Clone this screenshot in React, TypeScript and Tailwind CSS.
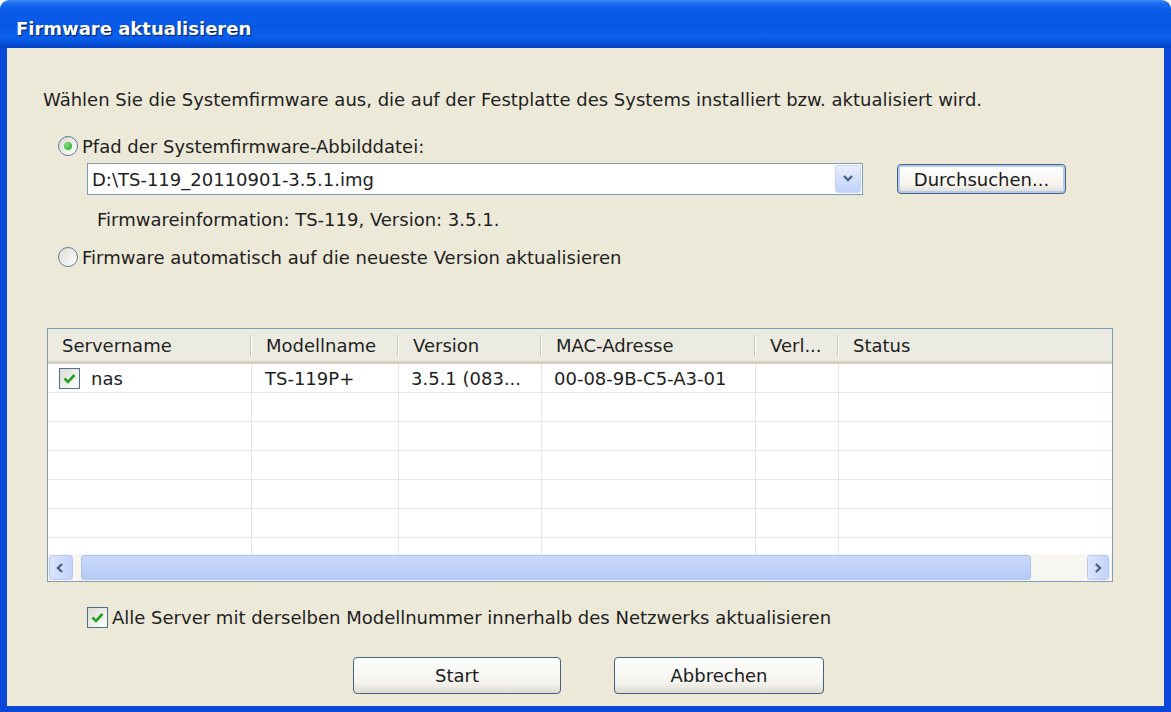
import React from "react";

type Server = {
  name: string;
  model: string;
  version: string;
  mac: string;
  checked: boolean;
};

const servers: Server[] = [
  { name: "nas", model: "TS-119P+", version: "3.5.1 (083...", mac: "00-08-9B-C5-A3-01", checked: true },
];

const columns = [
  { label: "Servername", width: "w-[204px]" },
  { label: "Modellname", width: "w-[147px]" },
  { label: "Version", width: "w-[143px]" },
  { label: "MAC-Adresse", width: "w-[214px]" },
  { label: "Verl...", width: "w-[83px]" },
  { label: "Status", width: "flex-1" },
];

function Radio({ checked }: { checked: boolean }) {
  return (
    <div className="w-[20px] h-[20px] rounded-full border border-[#5d7c9a] bg-[linear-gradient(135deg,#dcdad0,#ffffff)] flex items-center justify-center shrink-0">
      {checked && (
        <div className="w-[8px] h-[8px] rounded-full bg-[radial-gradient(circle_at_35%_35%,#7fe07f,#21a121)]" />
      )}
    </div>
  );
}

function CheckBox({ checked }: { checked: boolean }) {
  return (
    <div className="w-[21px] h-[21px] border border-[#4f6f8f] bg-[linear-gradient(135deg,#dcdcd4,#ffffff)] flex items-center justify-center shrink-0">
      {checked && (
        <svg width="13" height="11" viewBox="0 0 13 11">
          <path d="M1.5 5.5 L5 9 L11.5 2" stroke="#21a121" strokeWidth="2.6" fill="none" />
        </svg>
      )}
    </div>
  );
}

function XpButton({ children, className, focused }: { children: React.ReactNode; className: string; focused?: boolean }) {
  return (
    <button
      className={`${className} rounded-[4px] border border-[#46627e] bg-[linear-gradient(#ffffff,#f4f3ee_70%,#dedbd0)] text-[18px] text-[#1a1a1a] ${
        focused ? "shadow-[inset_0_0_0_2px_#b4ccf2]" : ""
      }`}
    >
      {children}
    </button>
  );
}

function Chevron({ dir }: { dir: "left" | "right" | "down" }) {
  const d =
    dir === "down" ? "M2 3 L6 7 L10 3" : dir === "left" ? "M7 2 L3 6 L7 10" : "M4 2 L8 6 L4 10";
  return (
    <svg width="12" height="12" viewBox="0 0 12 12">
      <path d={d} stroke="#4d6185" strokeWidth="2.4" fill="none" />
    </svg>
  );
}

export default function App() {
  const emptyRows = 6;
  return (
    <div className="w-[1171px] h-[712px] bg-white font-['DejaVu_Sans',sans-serif] text-[#1e1e1e] text-[18px]">
      <div className="w-full h-full flex flex-col rounded-t-[9px] overflow-hidden">
        {/* title bar */}
        <div className="h-[48px] shrink-0 flex items-center pl-[16px] pt-[8px] bg-[linear-gradient(#3d8af7,#1a6cf0_8%,#0a5ce8_20%,#0858e6_55%,#0a60ee_75%,#0552dc_90%,#0340bf)]">
          <span className="text-white font-bold text-[18px] [text-shadow:1px_1px_1px_#0a1f60]">
            Firmware aktualisieren
          </span>
        </div>

        {/* dialog body */}
        <div className="flex-1 border-x-[7px] border-b-[6px] border-[#0b47d9] bg-[#ece9d8] pl-[36px] pt-[40px] flex flex-col">
          <p className="leading-[24px] h-[24px]">
            Wählen Sie die Systemfirmware aus, die auf der Festplatte des Systems installiert bzw. aktualisiert wird.
          </p>

          <div className="mt-[22px] h-[24px] flex items-center gap-[4px] pl-[15px]">
            <Radio checked />
            <span>Pfad der Systemfirmware-Abbilddatei:</span>
          </div>

          <div className="mt-[5px] flex items-center pl-[44px]">
            <div className="w-[776px] h-[32px] border border-[#7f9db9] bg-white flex items-center">
              <span className="flex-1 pl-[4px]">D:\TS-119_20110901-3.5.1.img</span>
              <div className="w-[26px] h-[28px] mr-[1px] rounded-[3px] border border-[#c3d3fd] bg-[linear-gradient(#e6eefc,#c1d3fb)] flex items-center justify-center">
                <Chevron dir="down" />
              </div>
            </div>
            <XpButton className="ml-[34px] w-[169px] h-[30px]" focused>
              Durchsuchen...
            </XpButton>
          </div>

          <p className="mt-[13px] h-[24px] leading-[24px] pl-[54px]">Firmwareinformation: TS-119, Version: 3.5.1.</p>

          <div className="mt-[13px] h-[24px] flex items-center gap-[4px] pl-[15px]">
            <Radio checked={false} />
            <span>Firmware automatisch auf die neueste Version aktualisieren</span>
          </div>

          {/* server list */}
          <div className="mt-[59px] ml-[4px] w-[1066px] h-[254px] border border-[#7f9db9] bg-white flex flex-col overflow-hidden">
            <div className="h-[35px] shrink-0 flex bg-[#ecebe1] border-b-[3px] border-[#d6d2c2]">
              {columns.map((c) => (
                <div key={c.label} className={`${c.width} flex items-center pl-[14px] relative`}>
                  {c.label}
                  {c.label !== "Status" && (
                    <div className="absolute right-0 top-[6px] bottom-[5px] w-[2px] border-l border-[#cbc7b8] bg-white" />
                  )}
                </div>
              ))}
            </div>

            <div className="flex-1 overflow-hidden">
              {servers.map((s) => (
                <div key={s.name} className="h-[29px] flex border-b border-[#e6e6e6]">
                  <div className="w-[204px] flex items-center pl-[11px] gap-[11px] border-r border-[#e6e6e6]">
                    <CheckBox checked={s.checked} />
                    {s.name}
                  </div>
                  <div className="w-[147px] flex items-center pl-[13px] border-r border-[#e6e6e6]">{s.model}</div>
                  <div className="w-[143px] flex items-center pl-[12px] border-r border-[#e6e6e6]">{s.version}</div>
                  <div className="w-[214px] flex items-center pl-[12px] border-r border-[#e6e6e6]">{s.mac}</div>
                  <div className="w-[83px] border-r border-[#e6e6e6]" />
                  <div className="flex-1" />
                </div>
              ))}
              {Array.from({ length: emptyRows }).map((_, i) => (
                <div key={i} className="h-[29px] flex border-b border-[#e6e6e6]">
                  <div className="w-[204px] border-r border-[#e6e6e6]" />
                  <div className="w-[147px] border-r border-[#e6e6e6]" />
                  <div className="w-[143px] border-r border-[#e6e6e6]" />
                  <div className="w-[214px] border-r border-[#e6e6e6]" />
                  <div className="w-[83px] border-r border-[#e6e6e6]" />
                  <div className="flex-1" />
                </div>
              ))}
            </div>

            {/* horizontal scroll bar */}
            <div className="h-[27px] shrink-0 flex items-center bg-[#f7f6f1] px-[1px]">
              <div className="w-[24px] h-[25px] rounded-[3px] border border-[#b7c9f4] bg-[linear-gradient(90deg,#dbe5fc,#c2d3fb)] flex items-center justify-center">
                <Chevron dir="left" />
              </div>
              <div className="ml-[8px] w-[950px] h-[25px] rounded-[3px] border border-[#afc4f0] bg-[linear-gradient(#c9d8fb,#b7cbf6)]" />
              <div className="flex-1" />
              <div className="w-[22px] h-[25px] rounded-[3px] border border-[#b7c9f4] bg-[linear-gradient(90deg,#dbe5fc,#c2d3fb)] flex items-center justify-center mr-[2px]">
                <Chevron dir="right" />
              </div>
            </div>
          </div>

          <div className="mt-[23px] h-[24px] flex items-center gap-[4px] pl-[44px]">
            <CheckBox checked />
            <span>Alle Server mit derselben Modellnummer innerhalb des Netzwerks aktualisieren</span>
          </div>

          <div className="mt-[28px] flex pl-[310px] gap-[53px]">
            <XpButton className="w-[208px] h-[37px]">Start</XpButton>
            <XpButton className="w-[210px] h-[37px]">Abbrechen</XpButton>
          </div>
        </div>
      </div>
    </div>
  );
}
